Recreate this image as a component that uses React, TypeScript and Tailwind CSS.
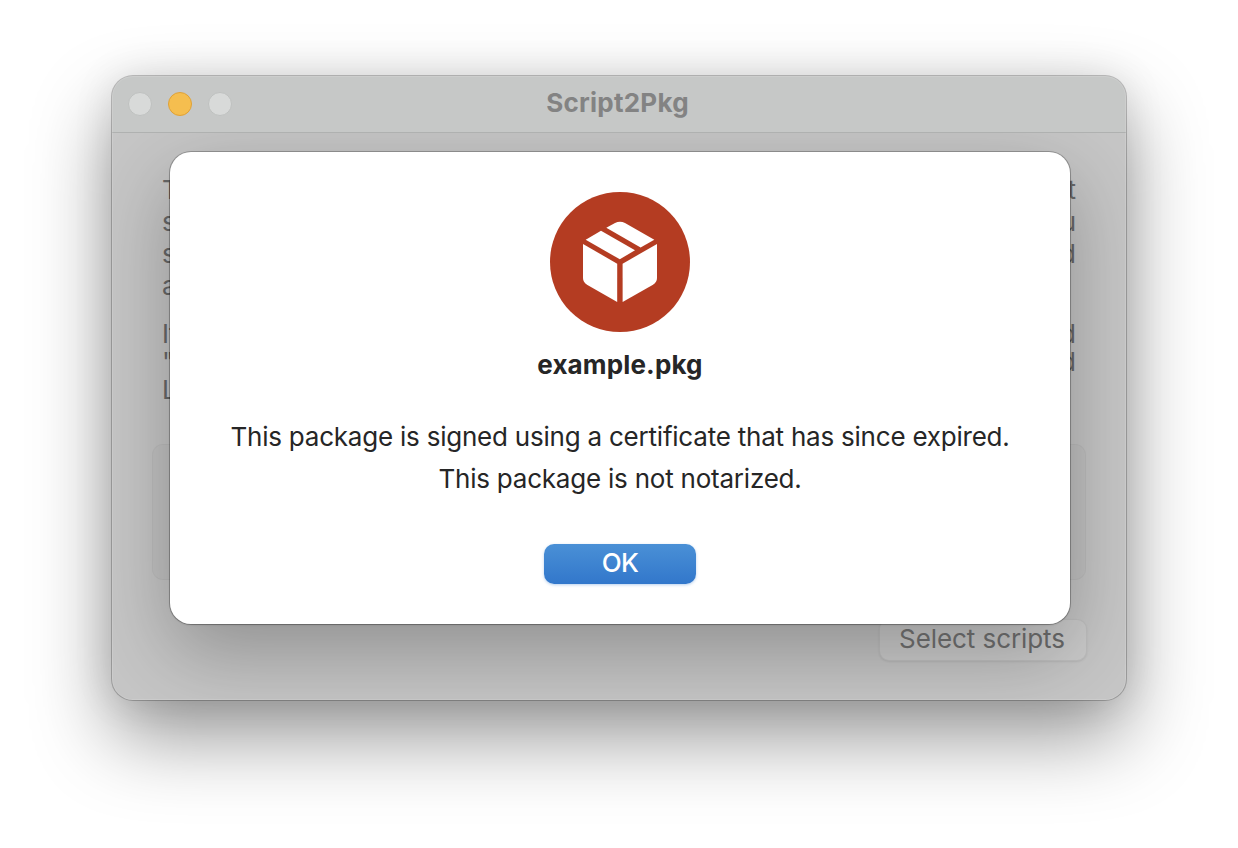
const firstParagraph = [
  ["T", "t"],
  ["s", "u"],
  ["s", "d"],
  ["a", ""],
];

const secondParagraph = [
  ["If", "d"],
  ['"I', "d"],
  ["L", ""],
];

function PackageIcon() {
  return (
    <svg width="140" height="140" viewBox="0 0 140 140" aria-hidden="true">
      <circle cx="70" cy="70" r="70" fill="#b43c22" />
      <g fill="#fff">
        <path d="M35.7 47.7 51 38.8 85 58.3 69.8 67.3Z" />
        <path d="M56.3 35.7 65 30.9Q70 28.6 75 30.9L104.3 47.7 90.6 55.6Z" />
        <path d="M33 52 67.2 71.7V110L37 92.7Q33 90 33 86Z" />
        <path d="M107 52 72.6 71.7V110L103 92.7Q107 90 107 86Z" />
      </g>
    </svg>
  );
}

function TitleBar() {
  return (
    <header className="relative flex h-[57px] items-center justify-center rounded-t-[21px] border-b border-[#afb1b0] bg-[#c6c8c7]">
      <div className="absolute top-4 left-4 flex gap-4">
        <span className="size-6 rounded-full border border-[#bec0bf] bg-[#d8dad9]" />
        <span className="size-6 rounded-full border border-[#dfa137] bg-[#f5be4f]" />
        <span className="size-6 rounded-full border border-[#bec0bf] bg-[#d8dad9]" />
      </div>
      <h1 className="mb-0.5 pr-[3px] text-[26px] leading-8 font-bold tracking-[0.25px] text-[#838383]">Script2Pkg</h1>
    </header>
  );
}

function Dialog() {
  return (
    <section
      role="dialog"
      className="absolute top-[76px] left-[58px] flex h-[472px] w-[900px] flex-col items-center rounded-[21px] bg-white pt-10 text-[#262626] shadow-[0_0_0_1px_rgba(0,0,0,0.24),0_1px_2px_rgba(0,0,0,0.15)]"
    >
      <PackageIcon />
      <h2 className="mt-[17px] text-[26px] leading-8 font-bold tracking-[0.15px]">example.pkg</h2>
      <div className="mt-[35px] text-center text-[26px] leading-[42px] tracking-[-0.22px] whitespace-nowrap">
        <p>This package is signed using a certificate that has since expired.</p>
        <p>This package is not notarized.</p>
      </div>
      <button className="mt-11 h-10 w-[152px] rounded-[10px] bg-linear-to-b from-[#4a90d6] to-[#3277cb] pb-0.5 text-[26px] leading-[38px] font-medium tracking-[-0.6px] text-white shadow-[0_1px_3px_rgba(50,119,203,0.35)]">
        OK
      </button>
    </section>
  );
}

export default function App() {
  return (
    <main className="flex h-[848px] w-[1238px] justify-center overflow-hidden bg-white pt-[76px] font-['Inter',sans-serif]">
      <div className="relative h-[624px] w-[1014px] rounded-[21px] bg-[#c6c6c6] shadow-[0_0_0_1px_rgba(0,0,0,0.22),0_36px_80px_rgba(0,0,0,0.42),0_0_40px_rgba(0,0,0,0.1)]">
        <div className="relative h-full overflow-hidden rounded-[21px]">
          <TitleBar />
          <div className="relative h-[567px] overflow-hidden px-10 pt-10 text-[#686868]">
            <div className="px-[10px] text-[26px]">
              {firstParagraph.map(([start, end], i) => (
                <p key={i} className="flex h-8 justify-between leading-[33px]">
                  <span>{start}</span>
                  <span>{end}</span>
                </p>
              ))}
              <div className="mt-[19px]">
                {secondParagraph.map(([start, end], i) => (
                  <p key={i} className="flex h-7 justify-between leading-7">
                    <span>{start}</span>
                    <span>{end}</span>
                  </p>
                ))}
              </div>
            </div>
            <div className="mt-10 h-[136px] rounded-[11px] border border-black/3 bg-black/[0.02]" />
            <div className="absolute top-[19px] left-[58px] h-[472px] w-[900px] rounded-[21px] shadow-[0_28px_80px_rgba(0,0,0,0.28)]" />
            <div className="mt-[39px] -mr-px flex justify-end">
              <button className="relative h-[42px] w-[208px] rounded-[10px] border border-black/6 bg-white/8 pr-0.5 pb-0.5 text-[26px] leading-9 tracking-[-0.08px] text-[#606060] shadow-[0_1px_2px_rgba(0,0,0,0.08)]">
                Select scripts
              </button>
            </div>
          </div>
          <div className="pointer-events-none absolute inset-0 rounded-[21px] shadow-[inset_0_0_0_1px_rgba(255,255,255,0.12)]" />
        </div>
        <Dialog />
      </div>
    </main>
  );
}
